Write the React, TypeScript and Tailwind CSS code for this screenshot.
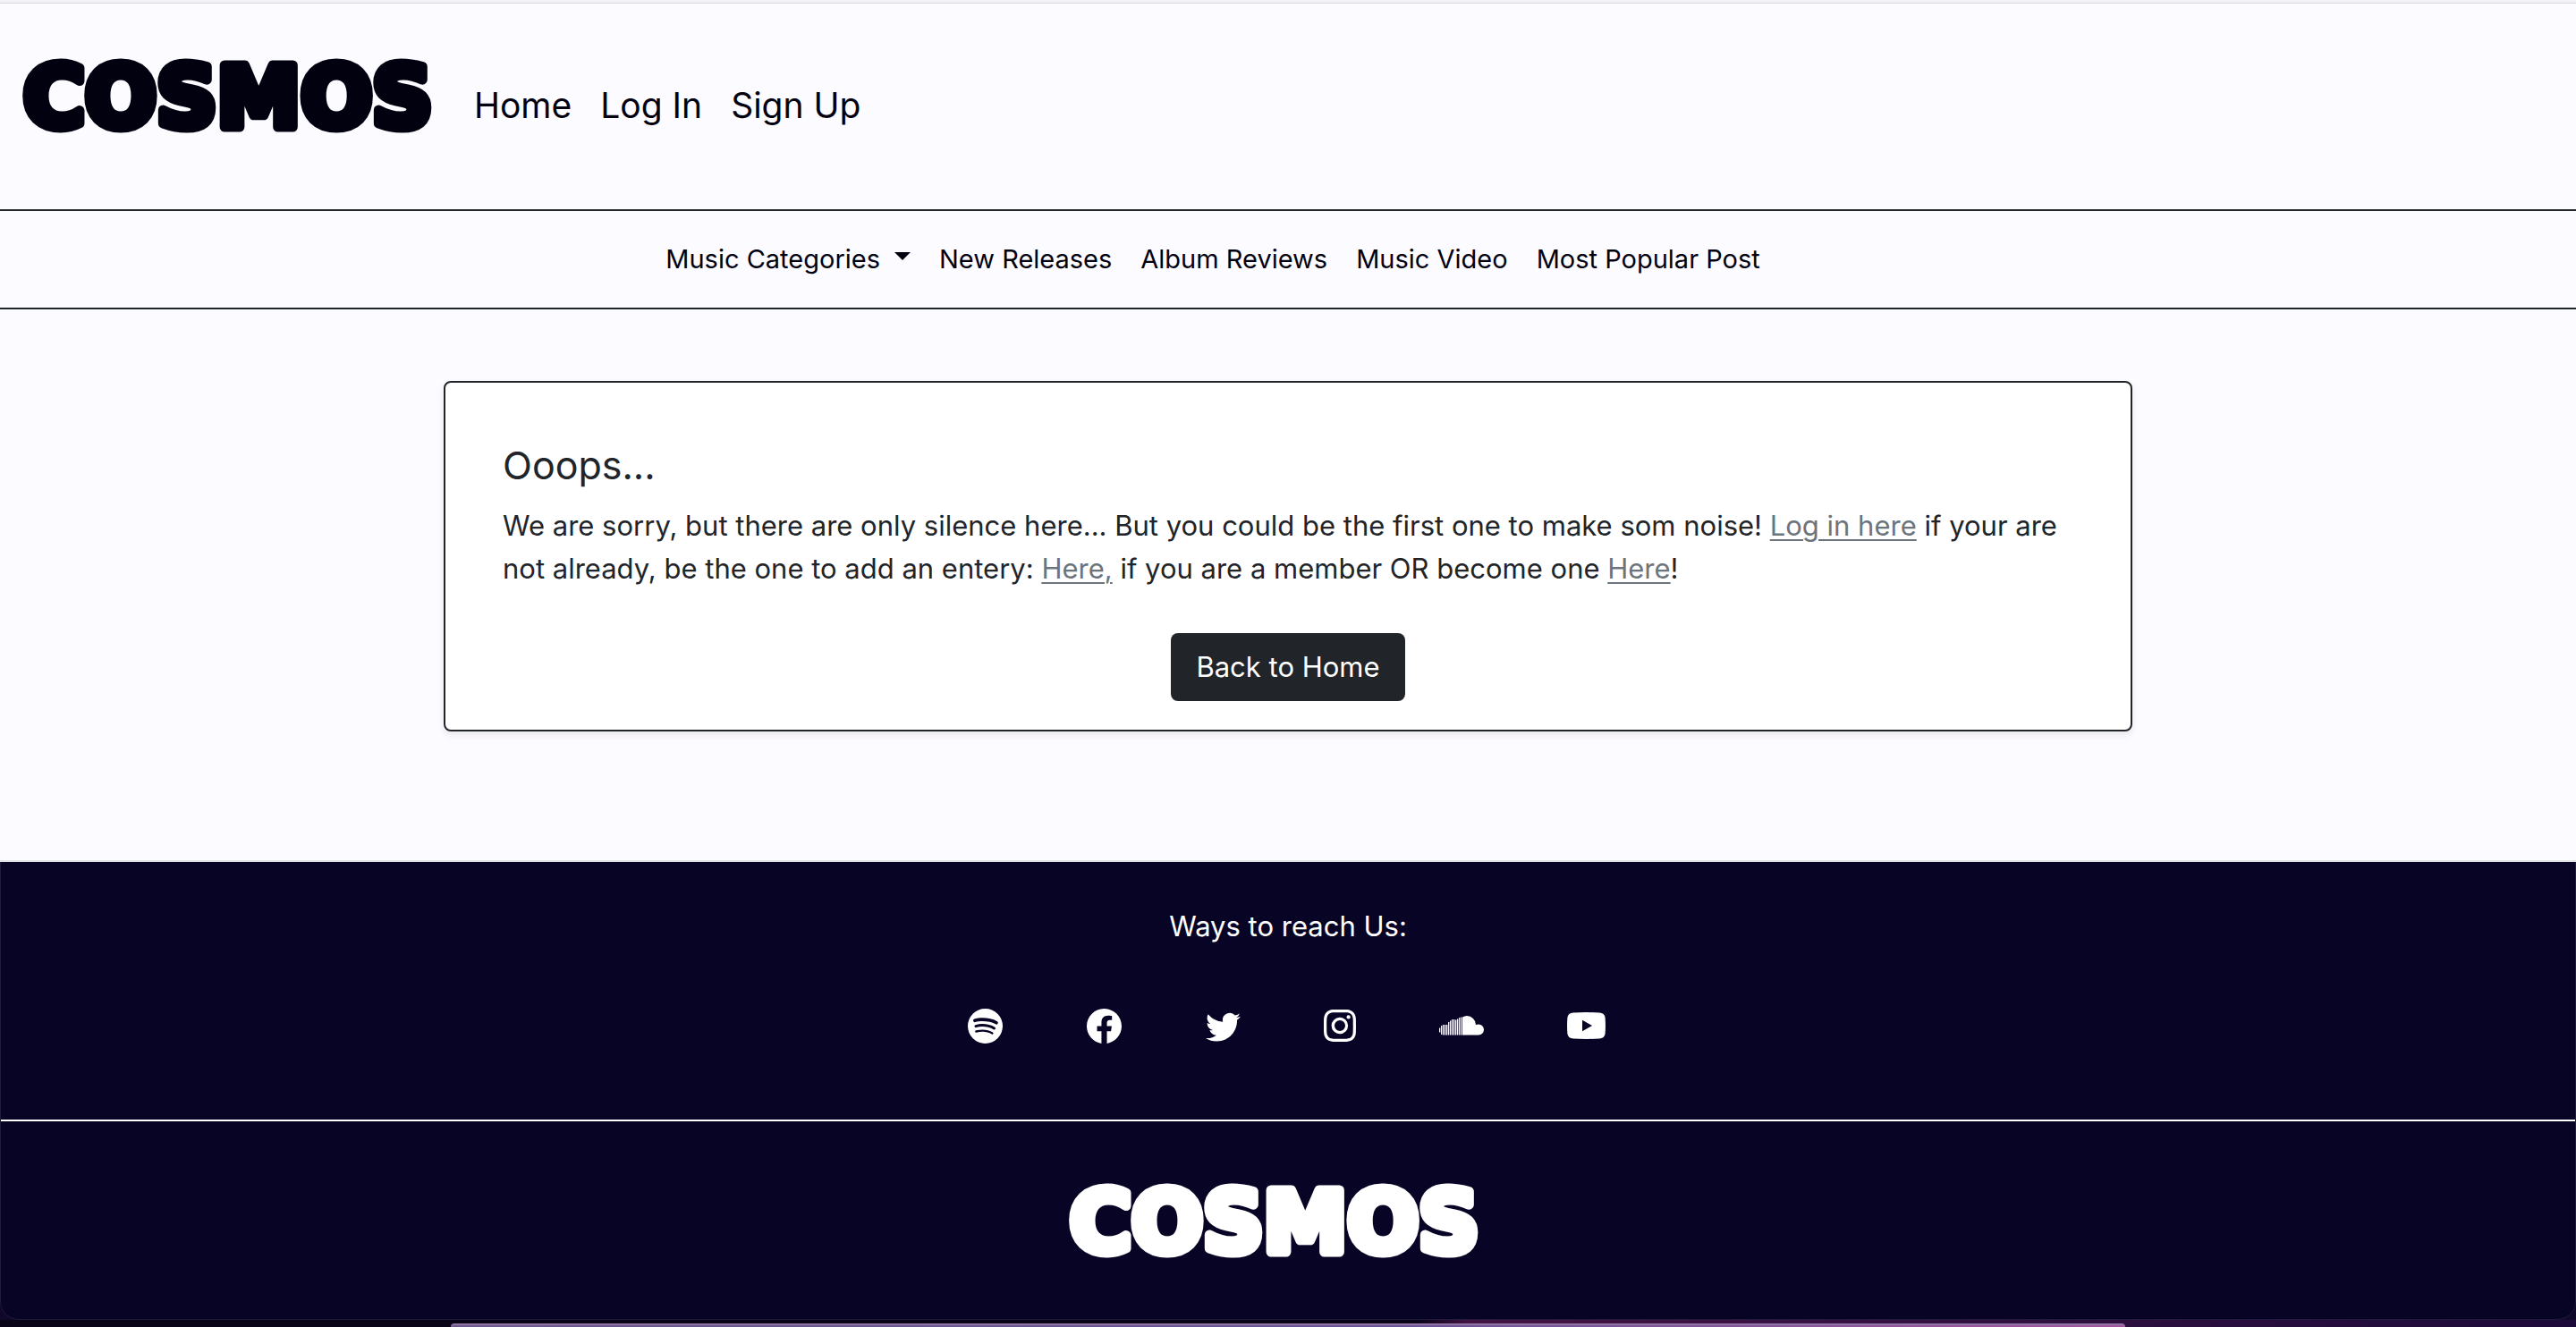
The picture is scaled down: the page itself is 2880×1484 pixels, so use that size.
import type { ReactNode } from "react";
import { BsSpotify, BsFacebook, BsTwitter, BsInstagram } from "react-icons/bs";

function Wordmark() {
  return (
    <svg viewBox="0 0 460 84" className="h-[84px] w-[460px] overflow-visible" role="img" aria-label="Cosmos">
      <text
        x="2"
        y="74"
        fontFamily="DejaVu Sans, sans-serif"
        fontWeight="700"
        fontSize="94"
        fill="currentColor"
        stroke="currentColor"
        strokeWidth="11"
        strokeLinejoin="round"
      >
        COSMOS
      </text>
    </svg>
  );
}

const soundBars: [number, number][] = [
  [27, 37], [22, 42], [20, 43], [20, 43], [20, 43], [14, 43], [11, 43],
  [8, 43], [8, 43], [9, 43], [7, 43], [4, 43], [3, 43],
];

function SoundCloudIcon() {
  return (
    <svg viewBox="0 0 100 44" className="h-[22px] w-[50px]" fill="currentColor" aria-hidden="true">
      {soundBars.map(([top, bottom], i) => (
        <rect key={i} x={i * 4} y={top} width="2.6" height={bottom - top} />
      ))}
      <path d="M52 43V3Q57 0 62 0A21 21 0 0 1 82 20Q85 19 88 19A12 12 0 0 1 88 43Z" />
    </svg>
  );
}

function YouTubeIcon() {
  return (
    <svg viewBox="0 0 43 30" className="h-[30px] w-[43px]" fill="currentColor" aria-hidden="true">
      <path
        fillRule="evenodd"
        d="M7 .5Q21 -.4 36 .5Q42 .8 42.6 6Q43.3 15 42.6 24Q42 29.2 36 29.5Q21 30.4 7 29.5Q1 29.2 .4 24Q-.3 15 .4 6Q1 .8 7 .5ZM17 8.8V21.2L28 15Z"
      />
    </svg>
  );
}

const socials: { label: string; width: string; icon: ReactNode }[] = [
  { label: "Spotify", width: "w-10", icon: <BsSpotify className="size-[39px]" /> },
  { label: "Facebook", width: "w-10", icon: <BsFacebook className="size-[39px]" /> },
  { label: "Twitter", width: "w-10", icon: <BsTwitter className="size-[39px]" /> },
  { label: "Instagram", width: "w-9", icon: <BsInstagram className="size-9" /> },
  { label: "SoundCloud", width: "w-[50px]", icon: <SoundCloudIcon /> },
  { label: "YouTube", width: "w-[43px]", icon: <YouTubeIcon /> },
];

const link = "text-[#6c757d] underline decoration-2 underline-offset-4";

export default function App() {
  return (
    <div className="flex min-h-screen flex-col bg-[#10082a] font-['Inter',sans-serif] text-[31px] text-[#212529]">
      <div className="flex flex-1 flex-col overflow-hidden rounded-b-[20px] bg-[#080426]">
        <div className="h-1 border-b border-[#d8d8dc] bg-[#f3f3f5]" />
        <div className="border-b-2 border-[#dee2e6] bg-[#fcfbff]">
          <header className="flex items-start gap-[46px] border-b-2 border-[#212529] px-6 pt-16 pb-[82px] text-[#02010f]">
            <a href="#home">
              <Wordmark />
            </a>
            <nav aria-label="Account" className="flex gap-8 pt-5 text-[39px] leading-[60px]">
              <a href="#home">Home</a>
              <a href="#login">Log In</a>
              <a href="#signup">Sign Up</a>
            </nav>
          </header>
          <nav
            aria-label="Categories"
            className="flex justify-center gap-8 border-b-2 border-[#212529] py-[30px] pr-[168px] text-[29px] leading-[48px] text-[#02010f]"
          >
            <button type="button" className="flex items-center gap-4">
              Music Categories
              <span className="mb-2 border-x-[9px] border-t-[9px] border-x-transparent border-t-[#02010f]" />
            </button>
            <a href="#new">New Releases</a>
            <a href="#reviews">Album Reviews</a>
            <a href="#video">Music Video</a>
            <a href="#popular">Most Popular Post</a>
          </nav>

          <main className="mx-auto w-2/3 px-4 pt-20 pb-36">
            <section className="rounded-lg border-2 border-[#212529] bg-white px-16 pt-16 pb-8 shadow-[0_4px_8px_rgba(0,0,0,0.08)]">
              <h1 className="text-[43px] leading-[56px]">Ooops...</h1>
              <p className="mt-4 leading-[48px]">
                We are sorry, but there are only silence here... But you could be the first one to make som noise!{" "}
                <a href="#login" className={link}>Log in here</a> if your are not already, be the one to add an entery:{" "}
                <a href="#add" className={link}>Here,</a> if you are a member OR become one{" "}
                <a href="#signup" className={link}>Here</a>!
              </p>
              <div className="mt-12 flex justify-center">
                <button type="button" className="rounded-lg bg-[#212529] px-7 py-[14px] leading-[48px] text-white">
                  Back to Home
                </button>
              </div>
            </section>
          </main>
        </div>

        <footer className="flex flex-1 flex-col rounded-b-[20px] border-x border-b border-[#201c3a] text-white">
          <div className="flex flex-col items-center border-b-2 border-white pt-12 pb-[85px]">
            <h2 className="leading-[48px]">Ways to reach Us:</h2>
            <ul className="mt-[67px] flex h-10 items-center gap-[93px] pr-1">
              {socials.map((s) => (
                <li key={s.label} className={s.width}>
                  <a href={"#" + s.label.toLowerCase()} aria-label={s.label} className="flex justify-center">
                    {s.icon}
                  </a>
                </li>
              ))}
            </ul>
          </div>
          <div className="flex flex-1 justify-center pt-[72px] pr-8 pb-16">
            <Wordmark />
          </div>
        </footer>
      </div>
      <div className="flex h-2 items-end justify-center bg-linear-to-r from-[#0a0418] from-55% via-[#431445] via-57% to-[#1c0a3a]">
        <div className="h-1 w-[65%] rounded-t-full border-t-2 border-[#8f74a4] bg-linear-to-r from-[#6e5a8e] via-[#69559a] via-55% to-[#a355a0]" />
      </div>
    </div>
  );
}
